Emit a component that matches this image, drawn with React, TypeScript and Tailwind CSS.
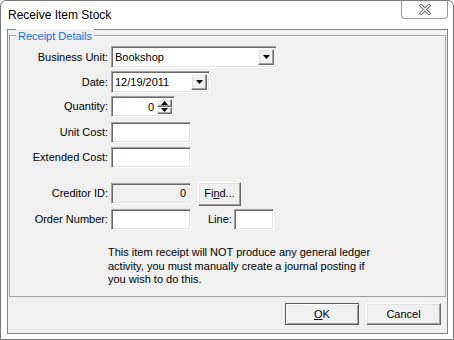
import React from "react";

const sunken =
  "border border-t-[#a0a0a0] border-l-[#a0a0a0] border-b-white border-r-white shadow-[inset_1px_1px_0_#696969,inset_-1px_-1px_0_#e3e3e3]";
const raised =
  "border border-t-white border-l-white border-b-[#696969] border-r-[#696969] shadow-[inset_-1px_-1px_0_#a0a0a0,inset_1px_1px_0_#e3e3e3] bg-[#f0f0f0]";

function Down() {
  return (
    <svg width={7} height={4} viewBox="0 0 7 4">
      <polygon points="0,0 7,0 3.5,4" fill="#000" />
    </svg>
  );
}

function Up() {
  return (
    <svg width={7} height={4} viewBox="0 0 7 4">
      <polygon points="0,4 7,4 3.5,0" fill="#000" />
    </svg>
  );
}

function Label({ children }: { children: React.ReactNode }) {
  return <div className="w-[101px] pr-[3px] text-right shrink-0">{children}</div>;
}

function TextBox({ w, value, gray }: { w: number; value?: string; gray?: boolean }) {
  return (
    <div
      className={`${sunken} h-[21px] flex items-center justify-end pr-[4px] ${gray ? "bg-[#f0f0f0]" : "bg-white"}`}
      style={{ width: w }}
    >
      {value}
    </div>
  );
}

function Combo({ w, value }: { w: number; value: string }) {
  return (
    <div className={`${sunken} bg-white h-[22px] flex items-stretch p-[2px]`} style={{ width: w }}>
      <div className="flex-1 pl-[1px] leading-[16px]">{value}</div>
      <div className={`${raised} w-[16px] flex items-center justify-center`}>
        <Down />
      </div>
    </div>
  );
}

export default function App() {
  return (
    <div className="w-[454px] h-[340px] bg-white border border-[#7a7a7a] rounded-t-[6px] flex flex-col text-[11px] text-black font-['Liberation_Sans',Arial,sans-serif] overflow-hidden">
      {/* Title bar */}
      <div className="h-[28px] flex justify-between shrink-0">
        <div className="pl-[7px] pt-[6px] text-[12px] leading-[16px]">Receive Item Stock</div>
        <div className="mr-[5px] w-[47px] h-[19px] border border-t-0 border-[#9a9a9a] rounded-b-[4px] bg-white flex items-center justify-center -mt-px">
          <svg width="12" height="11" viewBox="0 0 12 11">
            <path d="M2 1.5 L10 9.5 M10 1.5 L2 9.5" stroke="#6a6a6a" strokeWidth="3.2" strokeLinecap="square" />
            <path d="M2 1.5 L10 9.5 M10 1.5 L2 9.5" stroke="#f4f4f4" strokeWidth="1.4" strokeLinecap="square" />
          </svg>
        </div>
      </div>

      {/* Client area */}
      <div className="ml-[6px] mr-[5px] mb-[5px] flex-1 border border-[#828282] bg-[#f0f0f0] flex flex-col">
        {/* Group box */}
        <div className="mt-[5px] mx-[1px] h-[262px] border border-[#a0a0a0] shadow-[inset_1px_1px_0_#ffffff] flex flex-col">
          <div className="-mt-[7px] ml-[6px] px-[2px] w-fit bg-[#f0f0f0] text-[#1a6fd6] leading-[14px]">
            Receipt Details
          </div>

          <div className="flex flex-col">
            <div className="flex items-center mt-[3px] h-[22px]">
              <Label>Business Unit:</Label>
              <Combo w={166} value="Bookshop" />
            </div>
            <div className="flex items-center mt-[3px] h-[22px]">
              <Label>Date:</Label>
              <Combo w={99} value="12/19/2011" />
            </div>
            <div className="flex items-center mt-[3px] h-[21px]">
              <Label>Quantity:</Label>
              <div className={`${sunken} bg-white h-[21px] w-[64px] flex items-stretch p-[2px]`}>
                <div className="flex-1 text-right pr-[3px] leading-[16px]">0</div>
                <div className="w-[15px] flex flex-col">
                  <div className={`${raised} flex-1 flex items-center justify-center`}>
                    <Up />
                  </div>
                  <div className={`${raised} flex-1 flex items-center justify-center`}>
                    <Down />
                  </div>
                </div>
              </div>
            </div>
            <div className="flex items-center mt-[5px] h-[21px]">
              <Label>Unit Cost:</Label>
              <TextBox w={80} />
            </div>
            <div className="flex items-center mt-[4px] h-[21px]">
              <Label>Extended Cost:</Label>
              <TextBox w={80} />
            </div>
            <div className="flex items-center mt-[15px] h-[21px]">
              <Label>Creditor ID:</Label>
              <TextBox w={80} value="0" gray />
              <div className={`${raised} ml-[7px] w-[43px] h-[24px] flex items-center justify-center`}>
                <span>
                  Fi<span className="underline">n</span>d...
                </span>
              </div>
            </div>
            <div className="flex items-center mt-[5px] h-[21px]">
              <Label>Order Number:</Label>
              <TextBox w={80} />
              <div className="ml-[17px] w-[26px]">Line:</div>
              <TextBox w={40} />
            </div>
            <p className="mt-[16px] pl-[98px] leading-[13.5px]">
              This item receipt will NOT produce any general ledger
              <br />
              activity, you must manually create a journal posting if
              <br />
              you wish to do this.
            </p>
          </div>
        </div>

        {/* Buttons */}
        <div className="flex justify-end gap-[7px] pr-[6px] mt-[6px]">
          <div className="w-[74px] h-[22px] border border-[#5a5a5a] bg-[#f0f0f0] shadow-[inset_1px_1px_0_#ffffff,inset_-1px_-1px_0_#a0a0a0] flex items-center justify-center">
            <span>
              <span className="underline">O</span>K
            </span>
          </div>
          <div className={`${raised} w-[75px] h-[22px] flex items-center justify-center border-[#a0a0a0] border-b-[#696969] border-r-[#696969]`}>
            Cancel
          </div>
        </div>
      </div>
    </div>
  );
}
